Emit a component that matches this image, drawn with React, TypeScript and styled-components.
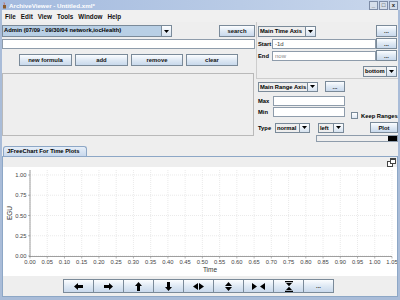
import { createGlobalStyle, styled } from "styled-components";

const GlobalStyle = createGlobalStyle`
  html, body {
    margin: 0;
    padding: 0;
    background: #eeeeee;
  }
  body {
    font-family: "Liberation Sans", Arial, sans-serif;
    font-size: 6px;
    color: #000;
  }
`;

const Frame = styled.div`
  width: 400px;
  height: 300px;
  display: flex;
  flex-direction: column;
  overflow: hidden;
  background: #eeeeee;
`;

const TitleBar = styled.div`
  height: 10px;
  flex: none;
  display: flex;
  align-items: center;
  padding: 0 2px;
  background: linear-gradient(to right, #a3bade, #b9cbe6 60%, #c9d7ec);
`;

const TitleText = styled.span`
  color: #fff;
  font-weight: bold;
  font-size: 6.2px;
  margin-left: 2px;
`;

const WinButtons = styled.div`
  margin-left: auto;
  display: flex;
  gap: 1px;
`;

const WinButton = styled.div`
  width: 7px;
  height: 7px;
  background: #d5deea;
  border: 1px solid #7d8ca6;
  display: flex;
  align-items: center;
  justify-content: center;
  font-size: 6px;
  font-weight: bold;
  line-height: 1;
  color: #222;
`;

const Body = styled.div`
  flex: 1;
  display: flex;
  flex-direction: column;
  border: solid #a9bcd8;
  border-width: 0 2px 3px 2px;
  min-height: 0;
`;

const MenuBar = styled.div`
  height: 12px;
  flex: none;
  display: flex;
  align-items: center;
  gap: 5px;
  padding-left: 3px;
  background: #f0f0f0;
  font-size: 6.3px;
  font-weight: bold;
  color: #111;
`;

const Top = styled.div`
  height: 124px;
  flex: none;
  display: grid;
  grid-template-columns: 253px 1fr;
  column-gap: 1px;
`;

const LeftCol = styled.div`
  display: flex;
  flex-direction: column;
  padding-top: 3px;
`;

const Row = styled.div<{ $top?: number }>`
  display: flex;
  align-items: center;
  margin-top: ${(p) => p.$top ?? 0}px;
`;

const ComboBox = styled.div<{ $w: number; $h?: number; $sel?: boolean }>`
  width: ${(p) => p.$w}px;
  height: ${(p) => p.$h ?? 11}px;
  box-sizing: border-box;
  display: flex;
  border: 1px solid #7a8a99;
  background: ${(p) => (p.$sel ? "#b8cfe5" : "#eeeeee")};
  flex: none;
`;

const ComboText = styled.span`
  flex: 1;
  font-weight: bold;
  font-size: 5.8px;
  line-height: 9px;
  padding-left: 1px;
  white-space: nowrap;
  overflow: hidden;
`;

const ComboArrow = styled.div`
  width: 9px;
  flex: none;
  border-left: 1px solid #7a8a99;
  background: linear-gradient(#fdfeff, #d6e2ef);
  display: flex;
  align-items: center;
  justify-content: center;
`;

const Button = styled.div<{ $w: number; $h?: number }>`
  width: ${(p) => p.$w}px;
  height: ${(p) => p.$h ?? 12}px;
  box-sizing: border-box;
  flex: none;
  border: 1px solid #7a8a99;
  background: linear-gradient(#fbfdff, #dce7f3 55%, #c9d9ec);
  display: flex;
  align-items: center;
  justify-content: center;
  font-weight: bold;
  font-size: 5.9px;
  color: #111;
`;

const TextField = styled.div<{ $w?: number; $dim?: boolean }>`
  width: ${(p) => (p.$w ? `${p.$w}px` : "auto")};
  height: 10px;
  box-sizing: border-box;
  flex: ${(p) => (p.$w ? "none" : "1")};
  border: 1px solid #8e9cab;
  background: #fff;
  font-size: 6px;
  line-height: 8px;
  padding-left: 2px;
  color: ${(p) => (p.$dim ? "#8a8a8a" : "#444")};
`;

const ButtonRow = styled.div`
  display: flex;
  gap: 3px;
  padding-left: 17px;
  margin-top: 5px;
`;

const ListPanel = styled.div`
  margin-top: 7px;
  height: 63px;
  width: 252px;
  box-sizing: border-box;
  border: 1px solid #b9b9b9;
  background: #eeeeee;
`;

const RightCol = styled.div`
  display: flex;
  flex-direction: column;
`;

const TimeGroup = styled.div`
  display: flex;
  flex-direction: column;
  height: 57px;
  box-sizing: border-box;
  padding: 3px 1px 0 1px;
  border-left: 1px solid #cdcdcd;
  border-bottom: 1px solid #cdcdcd;
`;

const RangeGroup = styled.div`
  display: flex;
  flex-direction: column;
  padding: 2px 0 0 2px;
`;

const Label = styled.span<{ $w: number }>`
  width: ${(p) => p.$w}px;
  flex: none;
  font-weight: bold;
  font-size: 5.8px;
`;

const Check = styled.label`
  display: flex;
  align-items: center;
  gap: 3px;
  margin-left: 6px;
  align-self: flex-end;
  margin-bottom: -2px;
  font-weight: bold;
  font-size: 5.8px;
  white-space: nowrap;
`;

const CheckBox = styled.span`
  width: 5px;
  height: 5px;
  border: 1px solid #7a8a99;
  background: linear-gradient(#ffffff, #dfe8f3);
`;

const Progress = styled.div`
  margin-left: auto;
  margin-top: 2px;
  width: 82px;
  height: 7px;
  box-sizing: border-box;
  border: 1px solid #8e9cab;
  background: #eeeeee;
  display: flex;
  justify-content: flex-end;
`;

const ProgressCell = styled.div`
  width: 9px;
  background: #000;
`;

const TabStrip = styled.div`
  height: 10px;
  flex: none;
  display: flex;
  align-items: flex-end;
  padding-left: 1px;
`;

const Tab = styled.div`
  width: 84px;
  height: 10px;
  box-sizing: border-box;
  border: 1px solid #8da7c6;
  border-bottom: none;
  border-radius: 3px 3px 0 0;
  background: linear-gradient(#e6eef8, #c8d8ec);
  font-weight: bold;
  font-size: 5.8px;
  line-height: 9px;
  padding-left: 3px;
  white-space: nowrap;
`;

const TabBody = styled.div`
  flex: 1;
  display: flex;
  flex-direction: column;
  border: 1px solid #8da7c6;
  min-height: 0;
`;

const ChartHeader = styled.div`
  height: 10px;
  flex: none;
  display: flex;
  justify-content: flex-end;
  align-items: center;
  padding-right: 1px;
  background: #eeeeee;
`;

const ChartArea = styled.svg`
  display: block;
  flex: none;
  background: #fff;
`;

const NavBar = styled.div`
  flex: 1;
  display: flex;
  padding: 3px 0 0 61px;
`;

const NavButton = styled(Button)`
  margin-left: -1px;
`;

const DownTri = () => (
  <svg width="5" height="3" viewBox="0 0 5 3">
    <path d="M0 0H5L2.5 3Z" fill="#000" />
  </svg>
);

const Combo = ({
  text,
  w,
  h,
  sel,
}: {
  text: string;
  w: number;
  h?: number;
  sel?: boolean;
}) => (
  <ComboBox $w={w} $h={h} $sel={sel}>
    <ComboText>{text}</ComboText>
    <ComboArrow>
      <DownTri />
    </ComboArrow>
  </ComboBox>
);

const navIcons: { w: number; h: number; d: string }[] = [
  { w: 9, h: 7, d: "M0 3.5L4 0V2H9V5H4V7Z" },
  { w: 9, h: 7, d: "M9 3.5L5 0V2H0V5H5V7Z" },
  { w: 7, h: 9, d: "M3.5 0L7 4H5V9H2V4H0Z" },
  { w: 7, h: 9, d: "M3.5 9L7 5H5V0H2V5H0Z" },
  { w: 11, h: 7, d: "M0 3.5L5 0V7Z M11 3.5L6 0V7Z" },
  { w: 7, h: 9, d: "M3.5 0L7 4H0Z M0 5H7L3.5 9Z" },
  { w: 13, h: 7, d: "M0 0L5 3.5L0 7Z M13 0L8 3.5L13 7Z" },
  { w: 8, h: 11, d: "M0 0H8V1.2H0Z M0 9.8H8V11H0Z M1 2H7L4 5.3Z M4 5.7L7 9H1Z" },
];

const xTicks = Array.from({ length: 22 }, (_, i) => i);
const yTicks = [0, 0.25, 0.5, 0.75, 1];
const px = (i: number) => 30 + (i * 362) / 21;
const py = (v: number) => 256 - v * 81;

const Chart = () => (
  <ChartArea width={394} height={109} viewBox="3 167 394 109">
    {xTicks.map((i) => (
      <line
        key={`gx${i}`}
        x1={px(i)}
        x2={px(i)}
        y1={170}
        y2={256}
        stroke="#dcdcdc"
        strokeWidth={0.6}
        strokeDasharray="1 1"
      />
    ))}
    {yTicks.map((v) => (
      <line
        key={`gy${v}`}
        x1={30}
        x2={392}
        y1={py(v)}
        y2={py(v)}
        stroke="#dcdcdc"
        strokeWidth={0.6}
        strokeDasharray="1 1"
      />
    ))}
    <line x1={30} x2={30} y1={170} y2={257} stroke="#888" strokeWidth={0.8} />
    <line x1={29} x2={392} y1={256.5} y2={256.5} stroke="#888" strokeWidth={0.8} />
    {yTicks.map((v) => (
      <g key={`ty${v}`}>
        <line x1={28} x2={30} y1={py(v)} y2={py(v)} stroke="#888" strokeWidth={0.6} />
        <text
          x={26.5}
          y={py(v) + 2}
          fontSize={5.8}
          textAnchor="end"
          fill="#444"
          fontFamily="Liberation Sans, sans-serif"
        >
          {v.toFixed(2)}
        </text>
      </g>
    ))}
    {xTicks.map((i) => (
      <g key={`tx${i}`}>
        <line x1={px(i)} x2={px(i)} y1={256.5} y2={258.5} stroke="#888" strokeWidth={0.6} />
        <text
          x={px(i)}
          y={263.5}
          fontSize={5.8}
          textAnchor="middle"
          fill="#444"
          fontFamily="Liberation Sans, sans-serif"
        >
          {(i * 0.05).toFixed(2)}
        </text>
      </g>
    ))}
    <text
      x={210}
      y={272}
      fontSize={6.5}
      textAnchor="middle"
      fill="#333"
      fontFamily="Liberation Sans, sans-serif"
    >
      Time
    </text>
    <text
      x={0}
      y={0}
      fontSize={6.5}
      textAnchor="middle"
      fill="#333"
      fontFamily="Liberation Sans, sans-serif"
      transform="translate(12 213) rotate(-90)"
    >
      EGU
    </text>
  </ChartArea>
);

export default function App() {
  return (
    <Frame>
      <GlobalStyle />
      <TitleBar>
        <svg width="5" height="7" viewBox="0 0 5 7">
          <path d="M1 3H4V6.5H1Z" fill="#8a5a2b" />
          <path d="M2 0.5C3 1.5 1.5 2 2.5 2.8" stroke="#d04020" strokeWidth="0.7" fill="none" />
        </svg>
        <TitleText>ArchiveViewer - Untitled.xml*</TitleText>
        <WinButtons>
          <WinButton>_</WinButton>
          <WinButton>□</WinButton>
          <WinButton>x</WinButton>
        </WinButtons>
      </TitleBar>
      <Body>
        <MenuBar>
          <span>File</span>
          <span>Edit</span>
          <span>View</span>
          <span>Tools</span>
          <span>Window</span>
          <span>Help</span>
        </MenuBar>
        <Top>
          <LeftCol>
            <Row>
              <Combo text="Admin (07/09 - 09/30/04 network,iocHealth)" w={170} h={12} sel />
              <Button $w={36} style={{ marginLeft: "auto" }}>
                search
              </Button>
            </Row>
            <Row $top={2}>
              <TextField />
            </Row>
            <ButtonRow>
              <Button $w={53}>new formula</Button>
              <Button $w={53}>add</Button>
              <Button $w={52}>remove</Button>
              <Button $w={52}>clear</Button>
            </ButtonRow>
            <ListPanel />
          </LeftCol>
          <RightCol>
            <TimeGroup>
              <Row>
                <Combo text="Main Time Axis" w={58} />
                <Button $w={21} style={{ marginLeft: "auto" }}>
                  ...
                </Button>
              </Row>
              <Row $top={1}>
                <Label $w={14}>Start</Label>
                <TextField $w={104}>-1d</TextField>
                <Button $w={21} $h={11}>
                  ...
                </Button>
              </Row>
              <Row $top={1}>
                <Label $w={14}>End</Label>
                <TextField $w={104} $dim>
                  now
                </TextField>
                <Button $w={21} $h={11}>
                  ...
                </Button>
              </Row>
              <Row $top={5} style={{ justifyContent: "flex-end" }}>
                <Combo text="bottom" w={34} />
              </Row>
            </TimeGroup>
            <RangeGroup>
              <Row>
                <Combo text="Main Range Axis" w={60} h={10} />
                <Button $w={20} $h={11} style={{ marginLeft: 7 }}>
                  ...
                </Button>
              </Row>
              <Row $top={4}>
                <Label $w={15}>Max</Label>
                <TextField $w={72} />
              </Row>
              <Row $top={1}>
                <Label $w={15}>Min</Label>
                <TextField $w={72} />
                <Check>
                  <CheckBox />
                  Keep Ranges
                </Check>
              </Row>
              <Row $top={5}>
                <Label $w={17}>Type</Label>
                <Combo text="normal" w={35} h={10} />
                <span style={{ width: 8 }} />
                <Combo text="left" w={26} h={10} />
                <Button $w={28} $h={11} style={{ marginLeft: "auto" }}>
                  Plot
                </Button>
              </Row>
              <Progress>
                <ProgressCell />
              </Progress>
            </RangeGroup>
          </RightCol>
        </Top>
        <TabStrip>
          <Tab>JFreeChart For Time Plots</Tab>
        </TabStrip>
        <TabBody>
          <ChartHeader>
            <svg width="9" height="9" viewBox="0 0 9 9">
              <rect x="0.5" y="3.5" width="5" height="5" fill="#fff" stroke="#444" />
              <rect x="3.5" y="0.5" width="5" height="5" fill="#fff" stroke="#444" />
              <rect x="3.5" y="0.5" width="5" height="1.5" fill="#444" />
            </svg>
          </ChartHeader>
          <Chart />
          <NavBar>
            {navIcons.map((ic, i) => (
              <NavButton key={i} $w={31} $h={14}>
                <svg width={ic.w} height={ic.h} viewBox={`0 0 ${ic.w} ${ic.h}`}>
                  <path d={ic.d} fill="#000" />
                </svg>
              </NavButton>
            ))}
            <NavButton $w={31} $h={14}>
              ...
            </NavButton>
          </NavBar>
        </TabBody>
      </Body>
    </Frame>
  );
}
